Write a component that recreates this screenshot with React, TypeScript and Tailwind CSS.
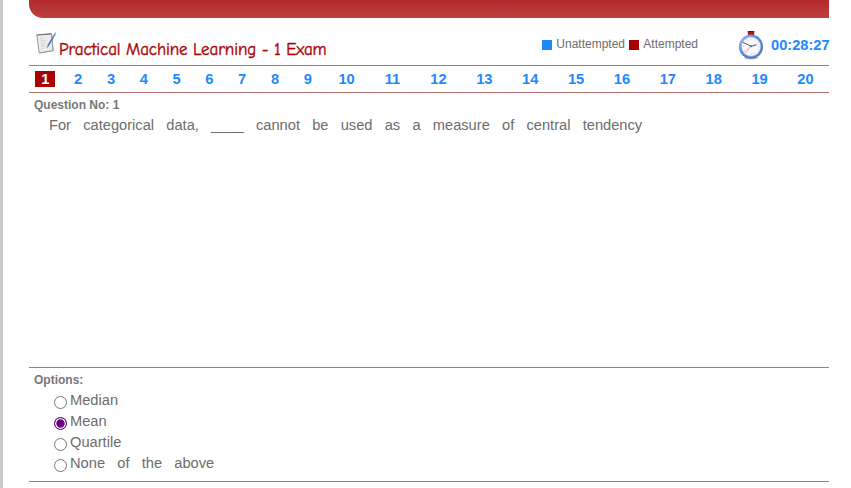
const questions = Array.from({ length: 20 }, (_, i) => i + 1);
const options = ['Median', 'Mean', 'Quartile', 'None of the above'];

function NotepadIcon() {
  return (
    <svg width="21" height="24" viewBox="0 0 21 24" className="shrink-0">
      <path d="M1 3.2 16 1.8 17.8 19 3.5 21.5Z" fill="#a9a9a9" />
      <path d="M.8 3 15.5 1.8 17 18.6 3.2 21Z" fill="#ececec" stroke="#8f8f8f" strokeWidth="0.9" />
      <path d="M.8 3 15.3 1.8" stroke="#777" strokeWidth="1.2" />
      <path d="M4 6.5 8 6M4.3 9 11 8.2M4.6 11.5 10 11M5 14 9 13.5M5.2 16.5 8 16" stroke="#cfcfcf" strokeWidth="0.8" />
      <path d="M19.3 1.5 11.8 14" stroke="#6c8cdb" strokeWidth="1.6" />
      <path d="M17.5 5 11 15.8" stroke="#4461b5" strokeWidth="0.8" />
      <path d="M19.8.5 18.7 2.2" stroke="#a9bdf0" strokeWidth="1.8" />
    </svg>
  );
}

function StopwatchIcon() {
  return (
    <svg width="26" height="30" viewBox="0 0 26 30" className="shrink-0">
      <defs>
        <linearGradient id="rim" x1="0" y1="0" x2="1" y2="1">
          <stop offset="0" stopColor="#a9c0e8" />
          <stop offset="0.45" stopColor="#4f7fd8" />
          <stop offset="1" stopColor="#6676ae" />
        </linearGradient>
      </defs>
      <ellipse cx="13" cy="28" rx="7" ry="1.5" fill="#b9b9c2" />
      <path d="M9.8 1h6.4v4H9.8z" fill="#a51519" />
      <path d="M9.8 1h6.4v1H9.8z" fill="#701015" />
      <path d="M9.3 5h7.4v1.3H9.3z" fill="#8f9bb3" />
      <circle cx="13" cy="16.7" r="12.1" fill="url(#rim)" />
      <circle cx="13" cy="16.5" r="10.2" fill="#8fb2ee" />
      <circle cx="13" cy="16.6" r="9.3" fill="#faf9fb" />
      <path d="M13 8.3v1.4M13 23.5V25M4.7 16.6h1.4M19.9 16.6h1.4M8.8 9.4l.7 1.2M16.5 22.6l.7 1.2M5.8 20.8l1.2-.7M19 13.1l1.2-.7M8.8 23.8l.7-1.2M16.5 10.6l.7-1.2" stroke="#c5c5cf" strokeWidth="0.8" />
      <path d="M13 16.2 6.4 23.2" stroke="#ef8580" strokeWidth="0.9" />
      <path d="M13.2 16.3 4.8 12.2M13.2 16.3 18.7 14.7" stroke="#555763" strokeWidth="1" />
      <circle cx="13.2" cy="16.3" r="1" fill="#66636f" />
    </svg>
  );
}

export default function App() {
  return (
    <div className="h-[488px] w-[851px] overflow-hidden border-l-[3px] border-[#cacaca] bg-white pl-[26px] font-['Liberation_Sans',Arial,sans-serif] text-[#6d6d6d]">
      <main className="w-[800px]">
        <div className="h-[18px] rounded-bl-[14px] bg-linear-to-b from-[#b3282b] to-[#bd4040]" />

        <header className="flex h-[47px] items-start">
          <div className="flex pt-[14px] pl-[7px]">
            <NotepadIcon />
            <h1 className="ml-[2px] mt-[6px] whitespace-nowrap font-['Comic_Sans_MS','Comic_Neue','Open_Sans',sans-serif] text-[17px] leading-[23px] tracking-[-0.1px] text-[#a90508] [-webkit-text-stroke:0.4px_#a90508]">
              Practical Machine Learning - 1 Exam
            </h1>
          </div>
          <div className="ml-auto mt-[17px] flex h-[18px] items-center text-[12px]">
            <span className="mr-[4px] mt-[2px] size-[10px] bg-[#1e88ff]" />
            <span className="w-[73px]">Unattempted</span>
            <span className="mr-[4px] mt-[2px] size-[10px] bg-[#a90003]" />
            <span>Attempted</span>
          </div>
          <div className="ml-[40px] mt-[12px] flex w-[91px] items-center gap-[7px]">
            <StopwatchIcon />
            <span className="whitespace-nowrap text-[14.667px] font-bold leading-[18px] text-[#1e88ff]">00:28:27</span>
          </div>
        </header>

        <nav className="flex h-[28px] items-center border-y border-[#b77374] text-[14.667px] font-bold text-[#1e88ff]">
          {questions.map((n) => (
            <div key={n} className={n < 10 ? 'flex w-[32.8px] shrink-0 justify-center' : 'flex flex-1 justify-center pr-px'}>
              <span className={n === 1 ? 'w-[20px] bg-[#a90003] text-center leading-[16px] text-white' : 'leading-[16px]'}>{n}</span>
            </div>
          ))}
        </nav>

        <section className="h-[274px] pl-[5px] pt-[4px]">
          <h2 className="text-[12px] font-bold leading-[16px] text-[#777]">Question No: 1</h2>
          <p className="ml-[15px] mt-[3px] whitespace-nowrap text-[14.667px] leading-[18px] [word-spacing:8.15px]">
            For categorical data, ____ cannot be used as a measure of central tendency
          </p>
        </section>

        <section className="h-[115px] border-y border-[#b77374] pl-[5px] pt-[4px]">
          <h2 className="text-[12px] font-bold leading-[16px] text-[#777]">Options:</h2>
          <div className="ml-[20px] mt-[2px]">
            {options.map((option) => (
              <label key={option} className="flex h-[21px] items-center text-[14.667px] leading-[17px] [word-spacing:8.15px]">
                <input
                  type="radio"
                  name="answer"
                  defaultChecked={option === 'Mean'}
                  className="mr-[3px] mt-[4px] size-[13px] shrink-0 appearance-none rounded-full border border-[#767676] bg-white checked:border-[#660080] checked:bg-[#660080] checked:shadow-[inset_0_0_0_1.3px_white]"
                />
                <span>{option}</span>
              </label>
            ))}
          </div>
        </section>
      </main>
    </div>
  );
}
